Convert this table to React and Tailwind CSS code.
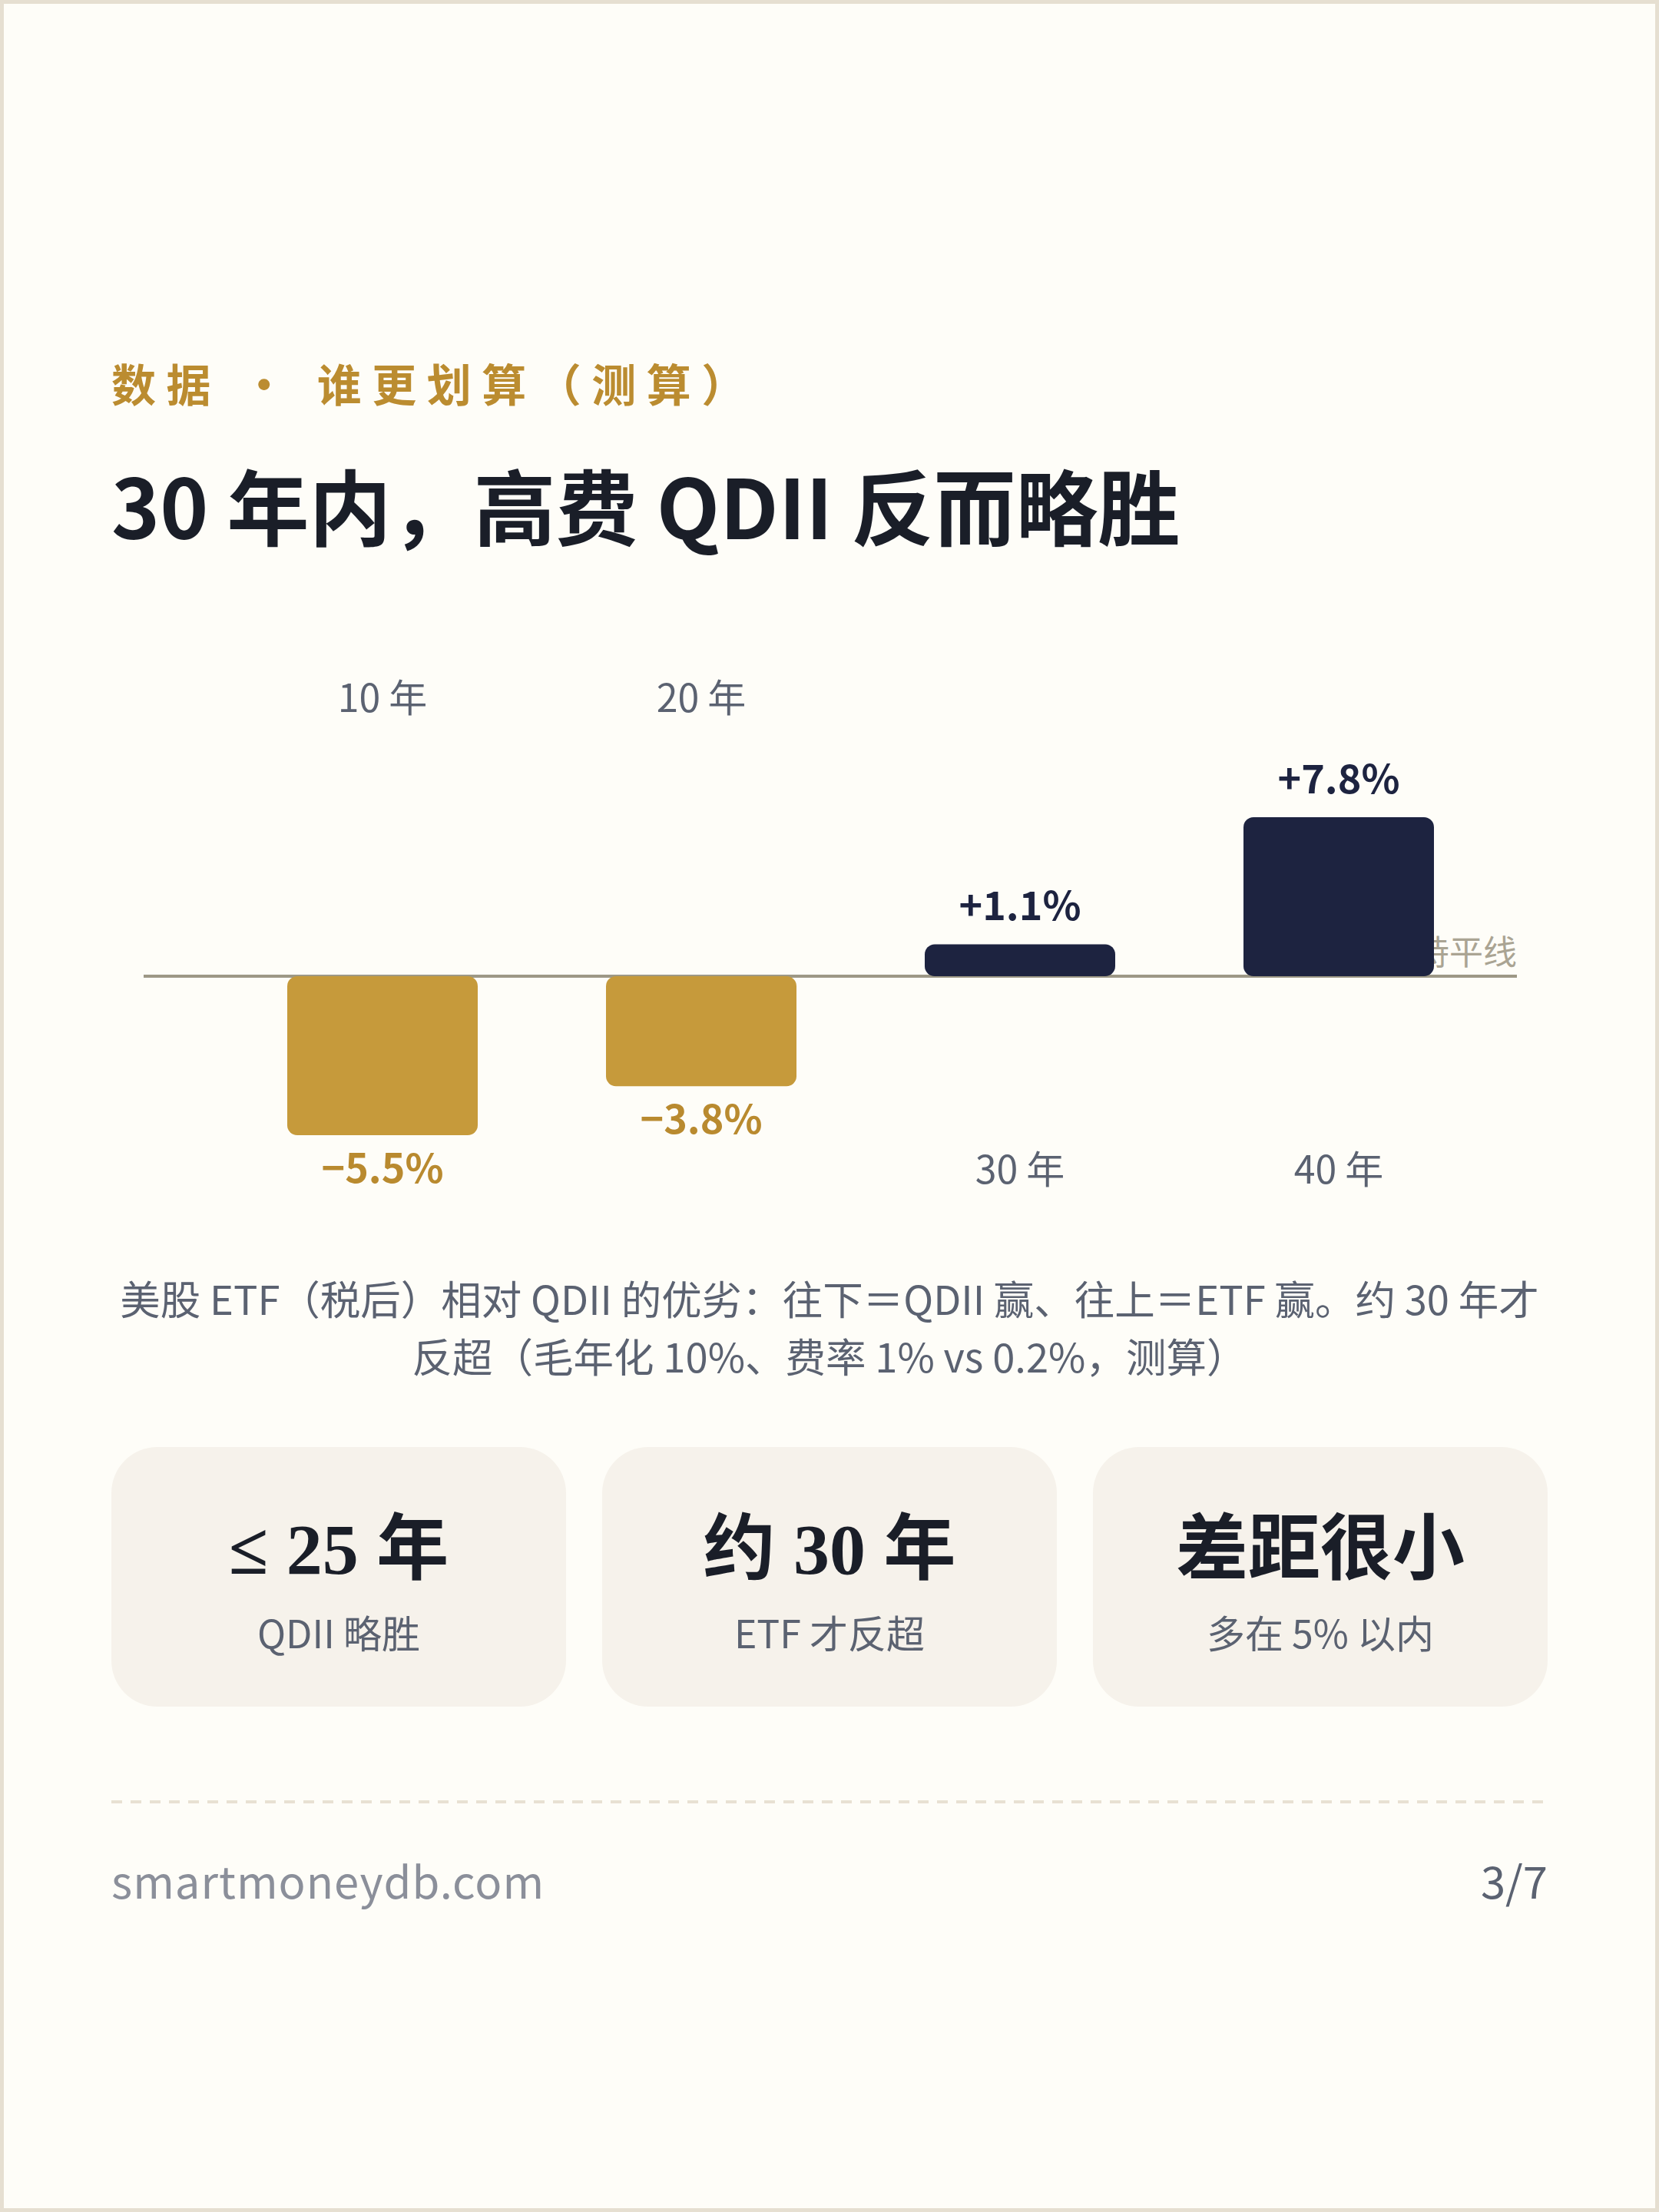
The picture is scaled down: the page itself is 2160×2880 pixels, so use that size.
const FONT = '"Noto Sans CJK SC", "Noto Sans", sans-serif';

const bars = [
  { label: "10 年", value: -5.5, text: "−5.5%" },
  { label: "20 年", value: -3.8, text: "−3.8%" },
  { label: "30 年", value: 1.1, text: "+1.1%" },
  { label: "40 年", value: 7.8, text: "+7.8%" },
];

const cards = [
  { big: "≤ 25 年", small: "QDII 略胜" },
  { big: "约 30 年", small: "ETF 才反超" },
  { big: "差距很小", small: "多在 5% 以内" },
];

function Chart() {
  const base = 411;
  const perPct = 37.7;
  const maxH = 207;
  const barW = 248;

  return (
    <svg width="1870" height="720" viewBox="0 0 1870 720" className="block" style={{ fontFamily: FONT }}>
      <line x1="42" y1={base} x2="1830" y2={base} stroke="#9d9886" strokeWidth="4" />
      <text x="1830" y="377" textAnchor="end" dominantBaseline="central" fontSize="44" fill="#aaa493">
        持平线
      </text>
      {bars.map((b, i) => {
        const cx = 353 + i * 415;
        const h = Math.min(Math.abs(b.value) * perPct, maxH);
        const up = b.value > 0;
        const y = up ? base - h : base;
        const valueY = up ? y - 54 : base + h + 39;
        return (
          <g key={b.label}>
            <rect x={cx - barW / 2} y={y} width={barW} height={h} rx="13" fill={up ? "#1d2340" : "#c69a3b"} />
            <text x={cx} y={valueY} textAnchor="middle" dominantBaseline="central" fontSize="52" fontWeight="700" fill={up ? "#1d2340" : "#b98a2f"}>
              {b.text}
            </text>
            <text x={cx} y={up ? 659 : 45} textAnchor="middle" dominantBaseline="central" fontSize="50" fill="#5b6271">
              {b.label}
            </text>
          </g>
        );
      })}
    </svg>
  );
}

export default function App() {
  return (
    <div
      className="w-[2160px] h-[2880px] border-[5px] border-[#e6dfd1] bg-[#fefdf8] px-[140px] pt-[458px]"
      style={{ fontFamily: FONT }}
    >
      {/* eyebrow */}
      <p className="text-[58px] leading-[70px] font-bold tracking-[13.5px] text-[#bb8c30]">
        数据 · 谁更划算（测算）
      </p>

      {/* title */}
      <h1 className="mt-[56px] text-[107px] leading-[134px] font-bold text-[#1a1e28]">
        30 年内，高费 QDII 反而略胜
      </h1>

      <div className="mt-[137px]">
        <Chart />
      </div>

      <p className="mt-[72px] text-center text-[52.5px] leading-[75px] text-[#5b6271]">
        <span className="block whitespace-nowrap">美股 ETF（税后）相对 QDII 的优劣：往下＝QDII 赢、往上＝ETF 赢。约 30 年才</span>
        <span className="block whitespace-nowrap">反超（毛年化 10%、费率 1% vs 0.2%，测算）</span>
      </p>

      {/* summary cards */}
      <div className="mt-[82px] grid grid-cols-3 gap-[47px]">
        {cards.map((c) => (
          <div key={c.big} className="h-[338px] rounded-[60px] bg-[#f6f2eb] flex flex-col items-center justify-center gap-[22px] pt-[9px]">
            <p
              className="text-[94px] leading-[110px] font-bold text-[#1a1e28]"
              style={{ fontFamily: '"Liberation Serif", "Noto Sans CJK SC", serif' }}
            >
              {c.big}
            </p>
            <p className="text-[50px] leading-[60px] text-[#5b6271]">{c.small}</p>
          </div>
        ))}
      </div>

      <div className="mt-[122px] h-[4px] bg-[repeating-linear-gradient(90deg,#e8e1d3_0px,#e8e1d3_14px,transparent_14px,transparent_25px)]" />

      <div className="mt-[64px] flex items-center justify-between">
        <span className="text-[58px] leading-[70px] tracking-[1px] text-[#8b8f9a]">smartmoneydb.com</span>
        <span className="text-[58px] leading-[70px] text-[#5b6271]">3/7</span>
      </div>
    </div>
  );
}
